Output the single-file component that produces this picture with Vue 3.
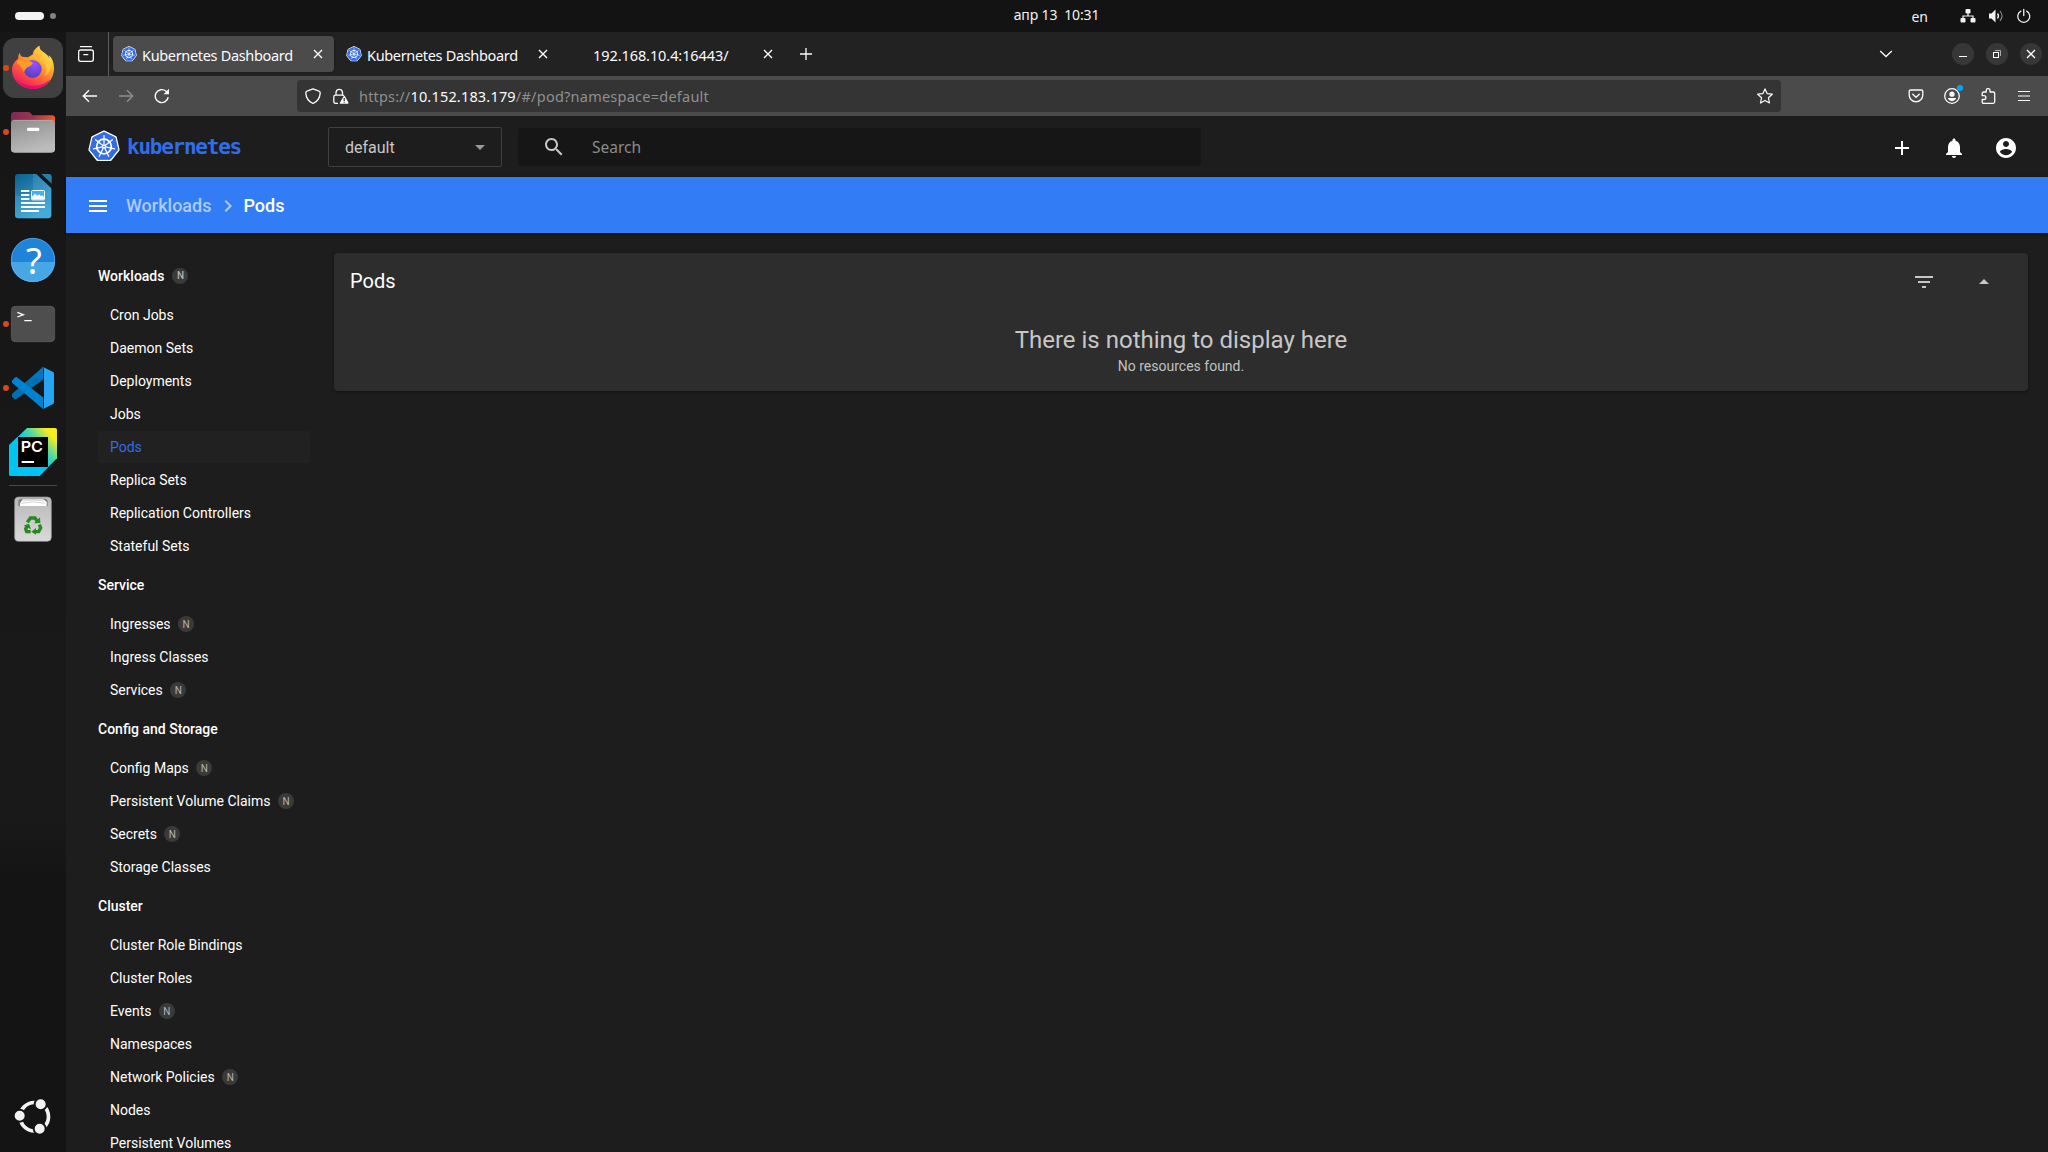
<script setup>
const point = (r, i, n = 7, offset = -90) => {
  const a = ((offset + (360 / n) * i) * Math.PI) / 180
  return [16 + r * Math.cos(a), 16 + r * Math.sin(a)].map((v) => v.toFixed(2))
}
const ring = (r) => Array.from({ length: 7 }, (_, i) => point(r, i).join(',')).join(' ')
const outerShape = ring(15)
const innerShape = ring(14.2)
const spokes = Array.from({ length: 7 }, (_, i) => {
  const [x1, y1] = point(1.5, i)
  const [x2, y2] = point(10.8, i)
  return { x1, y1, x2, y2 }
})

const tabs = [
  { title: 'Kubernetes Dashboard', icon: true, active: true },
  { title: 'Kubernetes Dashboard', icon: true },
  { title: '192.168.10.4:16443/', icon: false, address: true },
]

const sections = [
  {
    title: 'Workloads',
    n: true,
    items: [
      ['Cron Jobs'], ['Daemon Sets'], ['Deployments'], ['Jobs'], ['Pods'],
      ['Replica Sets'], ['Replication Controllers'], ['Stateful Sets'],
    ],
  },
  { title: 'Service', items: [['Ingresses', true], ['Ingress Classes'], ['Services', true]] },
  {
    title: 'Config and Storage',
    items: [['Config Maps', true], ['Persistent Volume Claims', true], ['Secrets', true], ['Storage Classes']],
  },
  {
    title: 'Cluster',
    items: [
      ['Cluster Role Bindings'], ['Cluster Roles'], ['Events', true], ['Namespaces'],
      ['Network Policies', true], ['Nodes'], ['Persistent Volumes'],
    ],
  },
]
</script>

<template>
  <div class="desktop">
    <svg class="defs" width="0" height="0">
      <symbol id="helm" viewBox="0 0 32 32">
        <polygon :points="outerShape" fill="#fff" stroke="#fff" stroke-width="2" stroke-linejoin="round" />
        <polygon :points="innerShape" fill="#326de6" stroke="#326de6" stroke-width="1" stroke-linejoin="round" />
        <circle cx="16" cy="16" r="7.3" fill="none" stroke="#fff" stroke-width="1.7" />
        <line v-for="(s, i) in spokes" :key="i" v-bind="s" stroke="#fff" stroke-width="1.25" stroke-linecap="round" />
        <circle cx="16" cy="16" r="2" fill="#fff" />
        <circle cx="16" cy="16" r=".8" fill="#326de6" />
      </symbol>
    </svg>

    <header class="topbar">
      <div class="workspaces"><i class="pill"></i><i class="dot"></i></div>
      <div class="clock">апр 13&nbsp; 10:31</div>
      <div class="tray">
        <span class="lang">en</span>
        <svg width="16" height="16" viewBox="0 0 16 16" fill="#f2f2f2">
          <rect x="5.5" y="1" width="5" height="4.4" rx="1" /><rect x=".5" y="10" width="5" height="4.4" rx="1" /><rect x="10.5" y="10" width="5" height="4.4" rx="1" />
          <path d="M8 5v3M3 10.500V8h10v2.500" fill="none" stroke="#f2f2f2" stroke-width="1.200" />
        </svg>
        <svg width="16" height="16" viewBox="0 0 16 16">
          <path d="M1 5.500h2.500L7.500 1.500v13L3.500 10.500H1z" fill="#f2f2f2" />
          <path d="M9.500 5.500q2 2.500 0 5" fill="none" stroke="#f2f2f2" stroke-width="1.300" />
          <path d="M12 3q4 5 0 10" fill="none" stroke="#888" stroke-width="1.200" />
        </svg>
        <svg width="16" height="16" viewBox="0 0 16 16" fill="none" stroke="#f2f2f2" stroke-width="1.300" stroke-linecap="round">
          <path d="M4.800 3.100a6 6 0 1 0 5.900 0M7.750 1.500v6" />
        </svg>
      </div>
    </header>

    <div class="body">
      <nav class="dock">
        <div class="slot focused">
          <svg class="app" viewBox="0 108 198 192">
            <defs>
              <linearGradient id="fx" x1=".85" y1=".1" x2=".3" y2="1"><stop offset="0" stop-color="#fff44f" /><stop offset=".35" stop-color="#ffa62b" /><stop offset=".65" stop-color="#ff5b3a" /><stop offset="1" stop-color="#ed1468" /></linearGradient>
              <radialGradient id="fxg" cx=".6" cy=".2" r=".9"><stop offset="0" stop-color="#9a50ff" /><stop offset="1" stop-color="#4b3fb5" /></radialGradient>
              <linearGradient id="fxr" x1="1" y1="0" x2="0" y2="1"><stop offset="0" stop-color="#fff04b" /><stop offset="1" stop-color="#ff8a2a" /></linearGradient>
            </defs>
            <path d="M60 158Q53 165 54 176Q36 190 36 208C36 243 64 267 99 267C135 267 162 240 162 205C162 184 154 171 146 166Q150 175 147 180Q135 159 122 150Q117 143 118 137Q103 148 99 163L84 172L66 170Q59 166 60 158Z" fill="url(#fx)" />
            <path d="M118 137Q96 150 99 168Q130 171 137 200Q141 219 128 232Q153 220 154 190Q147 163 126 154Q117 147 118 137Z" fill="url(#fxr)" />
            <path d="M48 236Q66 258 99 257Q130 258 151 237Q135 267 99 267Q67 266 48 236Z" fill="#e80078" opacity=".75" />
            <circle cx="98" cy="207" r="27" fill="url(#fxg)" />
            <path d="M52 182Q70 175 85 182Q95 185 99 189Q95 198 82 202Q74 209 72 217Q65 200 52 190Z" fill="#ff9a28" />
          </svg><i class="run"></i>
        </div>
        <div class="slot">
          <svg class="app" viewBox="0 300 198 192">
            <defs><linearGradient id="fo"><stop offset="0" stop-color="#7b2859" /><stop offset=".5" stop-color="#9d3550" /><stop offset="1" stop-color="#f0582a" /></linearGradient><linearGradient id="fg" x2="0.400" y2="1"><stop offset="0" stop-color="#8c8c8c" /><stop offset="1" stop-color="#bcbcbc" /></linearGradient></defs>
            <path d="M33 345q0-9 9-9h42q5 0 8 4l5 6h59q9 0 9 9v40H33z" fill="url(#fo)" />
            <rect x="33" y="360" width="132" height="98" rx="10" fill="url(#fg)" /><path d="M40 361h118" stroke="#b5b5b5" stroke-width="2" />
            <rect x="81" y="383" width="37" height="10" rx="4" fill="#fff" />
          </svg><i class="run"></i>
        </div>
        <div class="slot">
          <svg class="app" viewBox="0 492 198 192">
            <defs><linearGradient id="wr" x1="0" y1="0" x2=".5" y2="1"><stop offset="0" stop-color="#0b5f90" /><stop offset="1" stop-color="#45a8d8" /></linearGradient></defs>
            <path d="M54 522h55l45 43v80q0 10-10 10H54q-9 0-9-10V531q0-9 9-9z" fill="url(#wr)" />
            <path d="M99 522h10l45 43v22H99z" fill="#8ccfee" opacity=".18" /><path d="M45 587h109v58q0 10-10 10H54q-9 0-9-10z" fill="#48b0e0" opacity=".3" />
            <path d="M124 522h24q7 0 7 7v22z" fill="#287da9" />
            <path d="M63 573h25M63 585h25M63 597h25M63 609h72M63 621h72M63 633h54" stroke="#fff" stroke-width="6" />
            <rect x="94.500" y="571.500" width="39" height="28" rx="3" fill="#42b4ec" stroke="#fff" stroke-width="3" /><path d="M96 598v-8l9-9 7 6 6-4 5 6 4-3 6 7v5z" fill="#fff" />
          </svg>
        </div>
        <div class="slot">
          <svg class="app" viewBox="0 -6 198 192">
            <circle cx="99" cy="90" r="66" fill="#1f83d8" /><path d="M33 96h132a66 60 0 0 1-132 0z" fill="#48a6e6" />
            <circle cx="99" cy="90" r="65" fill="none" stroke="#63b4ec" stroke-width="2" />
            <text x="102" y="131" font-size="109" text-anchor="middle" fill="#fff" class="noto">?</text>
          </svg>
        </div>
        <div class="slot">
          <svg class="app" viewBox="0 186 198 192">
            <rect x="34" y="229" width="130" height="106" rx="12" fill="#4e4e4e" stroke="#656565" stroke-width="2" />
            <path d="M52 247l18 7-18 7M73 272h22" fill="none" stroke="#fff" stroke-width="4" />
          </svg><i class="run"></i>
        </div>
        <div class="slot">
          <svg class="app" viewBox="0 378 198 192">
            <path d="M36 492L129 411v38L49 507q-4 2-7-1l-6-7z" fill="#0070b4" />
            <path d="M36 452l8-9q4-3 7-1l78 60v35L36 458z" fill="#0082d0" />
            <path d="M129 411l29 14q4 2 4 6v86q0 4-4 6l-29 14q3-3 3-8v-110q0-5-3-8z" fill="#27a5f2" />
            <path d="M129 411l-35 34 35 0z" fill="#0078bf" />
          </svg><i class="run"></i>
        </div>
        <div class="slot">
          <svg class="app" viewBox="0 570 198 192">
            <defs><linearGradient id="py" x1=".35" y1=".6" x2=".95" y2=".05"><stop offset=".2" stop-color="#00c8f5" /><stop offset=".5" stop-color="#4bd8a5" /><stop offset=".85" stop-color="#f7ec20" /></linearGradient></defs>
            <path d="M81 594h84q6 0 6 6v85l-53 53H33q-6 0-6-6v-86z" fill="url(#py)" />
            <path d="M27 646l26-26v91h91l-26 27H33q-6 0-6-6z" fill="#00c5f3" />
            <rect x="54" y="621" width="90" height="90" /><rect x="65" y="693" width="37" height="6" fill="#fff" />
            <text x="62" y="667" font-size="45" font-weight="600" textLength="67" lengthAdjust="spacingAndGlyphs" fill="#fff" class="inter">PC</text>
          </svg>
        </div>
        <div class="rule"></div>
        <div class="slot">
          <svg class="app" viewBox="0 771 198 192">
            <defs><linearGradient id="tr" x2="0" y2="1"><stop offset="0" stop-color="#b8b8b8" /><stop offset="1" stop-color="#dadada" /></linearGradient></defs>
            <rect x="44" y="801" width="110" height="133" rx="12" fill="url(#tr)" stroke="#989898" stroke-width="2" />
            <path d="M55 828v-13q0-9 9-9h70q9 0 9 9v13z" fill="#808080" /><path d="M60 828v-8l8-12h62l10 8v12z" fill="#fff" /><path d="M64 820q34-9 72 0M66 813q36-6 66 0" fill="none" stroke="#aaa" stroke-width="1.500" />
            <g id="arrows" fill="none" stroke="#28891f" stroke-width="10">
              <path d="M82 877l9-13h14l8 11M118 884l4 10-6 11h-13M92 905H80l-3-8 6-11" />
            </g>
            <path d="M102 880l19-1-1-17zM108 894v20l-14-9zM71 887l16-6 6 17z" fill="#28891f" />
          </svg>
        </div>
        <div class="slot last">
          <svg class="app" viewBox="0 615 198 192">
            <circle cx="103" cy="710" r="42.500" fill="none" stroke="#f2f2f2" stroke-width="11" />
            <g fill="#f2f2f2" stroke="#151515" stroke-width="6"><circle cx="122" cy="673" r="18" /><circle cx="59" cy="707" r="18" /><circle cx="119" cy="746" r="18" /></g>
          </svg>
        </div>
      </nav>

      <div class="browser">
        <div class="tabstrip">
          <div class="tabview">
            <svg width="16" height="16" viewBox="0 0 16 16" fill="none" stroke="#fbfbfe" stroke-width="1.300" stroke-linecap="round"><rect x=".65" y="4" width="14.700" height="11.300" rx="2" /><path d="M2.500 .7h11M5.800 8.700h4" /></svg>
          </div>
          <div v-for="(t, i) in tabs" :key="i" class="tab" :class="{ active: t.active }">
            <svg v-if="t.icon" class="favicon"><use href="#helm" /></svg>
            <span v-else class="favicon"></span>
            <span class="tab-title" :class="{ address: t.address }">{{ t.title }}</span>
            <svg class="close" width="10" height="10" viewBox="0 0 10 10"><path d="M1 1l8 8M9 1L1 9" stroke="#fbfbfe" stroke-width="1.400" /></svg>
          </div>
          <svg class="newtab" width="14" height="14" viewBox="0 0 14 14"><path d="M7 1v12M1 7h12" stroke="#fbfbfe" stroke-width="1.300" /></svg>
          <div class="win">
            <svg class="down" width="14" height="14" viewBox="0 0 14 14" fill="none" stroke="#fbfbfe" stroke-width="1.300"><path d="M1.200 4L7 9.500 12.800 4" /></svg>
            <span class="wbtn"><svg width="12" height="12" viewBox="0 0 12 12"><path d="M2 8.500h8" stroke="#fff" /></svg></span>
            <span class="wbtn"><svg width="12" height="12" viewBox="0 0 12 12" fill="none"><path d="M4 2.500h5.500V8" stroke="#aaa" /><rect x="2.500" y="4.500" width="5" height="5" stroke="#fff" /></svg></span>
            <span class="wbtn"><svg width="12" height="12" viewBox="0 0 12 12"><path d="M2 2l8 8M10 2L2 10" stroke="#fff" stroke-width="1.300" /></svg></span>
          </div>
        </div>

        <div class="toolbar">
          <div class="navs">
            <svg width="16" height="16" viewBox="0 0 16 16" fill="none" stroke="#fbfbfe" stroke-width="1.400"><path d="M15 8H1.500M7 2.300L1.300 8 7 13.700" /></svg>
            <svg width="16" height="16" viewBox="0 0 16 16" fill="none" stroke="#8f8f91" stroke-width="1.400"><path d="M1 8h13.500M9 2.300L14.700 8 9 13.700" /></svg>
            <svg width="16" height="16" viewBox="0 0 16 16" fill="none" stroke="#fbfbfe" stroke-width="1.400"><path d="M14.200 9.100A6.500 6.500 0 1 1 12 3.200l1.500 1.200" /><path d="M15 .8v5.500H9.600z" fill="#fbfbfe" stroke="none" /></svg>
          </div>
          <div class="urlbar">
            <svg width="16" height="16" viewBox="0 0 16 16" fill="none" stroke="#fbfbfe" stroke-width="1.300" stroke-linejoin="round"><path d="M8 .8l6 2.300q1.300.5 1.200 2Q14.700 12.500 8 15.500 1.300 12.500.8 5.100q-.1-1.500 1.200-2z" /></svg>
            <svg class="lock" width="16" height="16" viewBox="0 0 16 16"><path d="M5 15.300H2.500q-1.700 0-1.700-1.700V9q0-1.800 1.700-1.800h7q1 0 1.400.6M3 7V4.300a3.300 3.500 0 0 1 6.500 0V7" fill="none" stroke="#fbfbfe" stroke-width="1.300" /><path d="M10.800 8.100q.5-.7 1 0l3.700 6.700q.3.900-.6.900H7.400q-.9 0-.5-.9z" fill="#fbfbfe" /><path d="M11.200 10v3M11.200 13.700v1" stroke="#333" stroke-width="1.200" /></svg>
            <div class="url"><span class="scheme">https://</span><b class="host">10.152.183.179</b><span class="path">/#/pod?namespace=default</span></div>
            <svg class="star" width="16" height="16" viewBox="0 0 16 16" fill="none" stroke="#fbfbfe" stroke-width="1.200" stroke-linejoin="round"><path d="M8 .9l2.100 4.700 5.200.6-3.900 3.500 1.100 5.300L8 12.400 3.500 15l1.100-5.300L.7 6.200l5.200-.6z" /></svg>
          </div>
          <div class="extras">
            <svg width="16" height="16" viewBox="0 0 16 16" fill="none" stroke="#fbfbfe" stroke-width="1.300" stroke-linecap="round"><path d="M2.500 2h11q1.300 0 1.300 1.300V7a6.800 6.800 0 0 1-13.600 0V3.300Q1.200 2 2.500 2zM4.700 6.300L8 9.300l3.300-3" /></svg>
            <span class="acct"><svg width="16" height="16" viewBox="0 0 16 16"><circle cx="8" cy="8" r="7.300" fill="none" stroke="#fbfbfe" stroke-width="1.300" /><circle cx="8" cy="6.200" r="2.600" fill="#fbfbfe" /><path d="M4 10h8v.8q-1.500 2.400-4 2.400t-4-2.400z" fill="#fbfbfe" /></svg><i></i></span>
            <svg width="16" height="16" viewBox="0 0 16 16" fill="none" stroke="#fbfbfe" stroke-width="1.300" stroke-linejoin="round"><path d="M6.200 4V2.500a1.900 1.900 0 0 1 3.800 0V4h3.200q1.500 0 1.500 1.500v8.300q0 1.500-1.500 1.500H3.700q-1.500 0-1.500-1.500v-2.300H4a1.900 1.900 0 0 0 0-3.800H2.200V5.500Q2.200 4 3.700 4z" /></svg>
            <svg width="16" height="16" viewBox="0 0 16 16" stroke="#fbfbfe" stroke-width="1.200"><path d="M2 3.500h12M2 8h12M2 12.500h12" /></svg>
          </div>
        </div>

        <div class="apphead">
          <svg class="logo"><use href="#helm" /></svg>
          <span class="brand">kubernetes</span>
          <div class="ns"><span>default</span><i></i></div>
          <div class="search">
            <svg width="24" height="24" viewBox="0 0 24 24" fill="#c7c7c7"><path d="M15.500 14h-.79l-.28-.27C15.410 12.590 16 11.110 16 9.500 16 5.910 13.090 3 9.500 3S3 5.910 3 9.500 5.910 16 9.500 16c1.610 0 3.090-.59 4.230-1.570l.27.28v.79l5 4.990L20.490 19l-4.990-5zm-6 0C7.010 14 5 11.990 5 9.500S7.010 5 9.500 5 14 7.010 14 9.500 11.990 14 9.500 14z" /></svg>
            <span>Search</span>
          </div>
          <div class="actions">
            <svg width="24" height="24" viewBox="0 0 24 24" fill="#fff"><path d="M19 13h-6v6h-2v-6H5v-2h6V5h2v6h6v2z" /></svg>
            <svg width="24" height="24" viewBox="0 0 24 24" fill="#fff"><path d="M12 22c1.100 0 2-.9 2-2h-4c0 1.100.89 2 2 2zm6-6v-5c0-3.070-1.640-5.640-4.500-6.320V4c0-.83-.67-1.500-1.500-1.500s-1.500.67-1.500 1.500v.68C7.630 5.360 6 7.920 6 11v5l-2 2v1h16v-1l-2-2z" /></svg>
            <svg width="24" height="24" viewBox="0 0 24 24" fill="#fff"><path d="M12 2C6.480 2 2 6.480 2 12s4.480 10 10 10 10-4.480 10-10S17.520 2 12 2zm0 3c1.660 0 3 1.340 3 3s-1.340 3-3 3-3-1.340-3-3 1.340-3 3-3zm0 14.200c-2.500 0-4.710-1.280-6-3.220.03-1.990 4-3.080 6-3.080 1.990 0 5.970 1.090 6 3.080-1.290 1.940-3.500 3.220-6 3.220z" /></svg>
          </div>
        </div>

        <div class="crumbs">
          <svg class="menu" width="24" height="24" viewBox="0 0 24 24" fill="#fff"><path d="M3 18h18v-2H3v2zm0-5h18v-2H3v2zm0-7v2h18V6H3z" /></svg>
          <span class="parent">Workloads</span>
          <svg class="sep" width="24" height="24" viewBox="0 0 24 24" fill="#adcbfb"><path d="M10 6L8.590 7.410 13.170 12l-4.580 4.590L10 18l6-6z" /></svg>
          <span class="here">Pods</span>
        </div>

        <div class="page">
          <aside class="side">
            <template v-for="s in sections" :key="s.title">
              <div class="group">{{ s.title }}<i v-if="s.n" class="badge">N</i></div>
              <div v-for="it in s.items" :key="it[0]" class="item" :class="{ on: it[0] === 'Pods' }">{{ it[0] }}<i v-if="it[1]" class="badge">N</i></div>
            </template>
          </aside>
          <main class="main">
            <section class="card">
              <div class="card-head">
                <h1>Pods</h1>
                <svg width="24" height="24" viewBox="0 0 24 24" fill="#c7c7c7"><path d="M10 18h4v-2h-4v2zM3 6v2h18V6H3zm3 7h12v-2H6v2z" /></svg>
                <svg width="24" height="24" viewBox="0 0 24 24" fill="#c7c7c7"><path d="M7 14l5-5 5 5z" /></svg>
              </div>
              <p class="empty">There is nothing to display here</p>
              <p class="hint">No resources found.</p>
            </section>
          </main>
        </div>
      </div>
    </div>
  </div>
</template>

<style>
body { background: #161616; overflow: hidden; }
</style>

<style scoped>
* { box-sizing: border-box; }
.desktop { width: 2048px; height: 1152px; overflow: hidden; display: flex; flex-direction: column; background: #161616; color: #fff; font-family: "Noto Sans", sans-serif; }
svg { display: block; flex: none; }
.defs { position: absolute; }
.noto { font-family: "Noto Sans", sans-serif; }
.inter { font-family: Inter, sans-serif; }
.topbar { height: 32px; flex: none; background: #131313; display: grid; grid-template-columns: 1fr auto 1fr; align-items: center; }
.workspaces { display: flex; align-items: center; gap: 6px; padding-left: 15px; }
.pill { width: 29px; height: 8px; border-radius: 4px; background: #f2f2f2; }
.dot { width: 6px; height: 6px; border-radius: 50%; background: #838383; }
.clock { font-size: 14px; line-height: 20px; color: #f2f2f2; padding-left: 65px; letter-spacing: -.15px; margin-bottom: 2px; }
.tray { display: flex; align-items: center; justify-content: flex-end; gap: 12px; padding-right: 16px; }
.lang { font-size: 14px; color: #f2f2f2; margin-right: 20px; }
.body { flex: 1; min-height: 0; display: flex; }
.dock { width: 66px; flex: none; background: linear-gradient(#161616, #191919 70%, #141414 76%); padding: 4px 0 3px; display: flex; flex-direction: column; }
.slot { position: relative; height: 64px; flex: none; }
.slot.focused { background: #404040; margin: 2px 3px; height: 60px; border-radius: 12px; }
.slot.focused .app { margin: -2px -3px; }
.app { width: 66px; height: 64px; }
.run { position: absolute; left: 3px; top: 29px; width: 6px; height: 6px; border-radius: 50%; background: #d9481c; }
.focused .run { left: 0; top: 27px; }
.rule { height: 1px; background: #484848; margin: 1px 9px; }
.last { margin-top: auto; }
.browser { flex: 1; min-width: 0; display: flex; flex-direction: column; background: #1d1d1d; }
.tabstrip { height: 44px; flex: none; background: #222; display: flex; align-items: center; }
.tabview { width: 43px; height: 44px; border-right: 1px solid #5c5c5c; padding: 14px 0 0 12px; margin-right: 4px; }
.tab { width: 221px; height: 36px; margin-right: 4px; border-radius: 4px; display: flex; align-items: center; padding: 0 11px 0 8px; }
.tab.active { background: #4b4b4b; box-shadow: 0 0 3px rgba(0, 0, 0, .3); }
.favicon { width: 16px; height: 16px; flex: none; margin-right: 5px; }
.tab-title { font-size: 14.500px; letter-spacing: -.33px; color: #fbfbfe; flex: 1; white-space: nowrap; padding-top: 1px; }
.tab-title.address { letter-spacing: -.08px; padding-left: 1px; }
.close { flex: none; }
.newtab { margin-left: 11px; }
.win { margin-left: auto; display: flex; align-items: center; gap: 12px; padding-right: 6px; }
.down { margin-right: 47px; }
.wbtn { width: 22px; height: 22px; border-radius: 50%; background: #373737; display: flex; align-items: center; justify-content: center; }
.toolbar { height: 40px; flex: none; background: #4b4b4b; display: flex; align-items: center; }
.navs { width: 231px; display: flex; gap: 20px; padding-left: 16px; }
.urlbar { width: 1484px; height: 32px; border-radius: 4px; background: #343434; display: flex; align-items: center; padding: 0 8px; }
.lock { margin-left: 12px; }
.url { margin-left: 10px; font-size: 14.500px; letter-spacing: .18px; color: #8f8f91; white-space: nowrap; }
.host { font-weight: 400; color: #fbfbfe; }
.path { letter-spacing: .24px; }
.star { margin-left: auto; }
.extras { margin-left: auto; padding-right: 16px; display: flex; gap: 20px; }
.acct { position: relative; }
.acct i { position: absolute; right: -3px; top: -3px; width: 6px; height: 6px; border-radius: 50%; background: #00a8f5; }
.apphead { height: 61px; flex: none; display: flex; align-items: center; padding: 0 30px 0 22px; }
.logo { width: 32px; height: 33px; }
.brand { width: 120px; margin-left: 7px; font: bold 21px "DejaVu Sans Mono", monospace; letter-spacing: -1.250px; color: #326de6; }
.ns { width: 174px; height: 40px; margin-left: 81px; border: 1px solid #404040; border-radius: 2px; display: flex; align-items: center; justify-content: space-between; padding: 1px 16px 0; font: 16px Roboto, sans-serif; color: #c7c7c7; }
.ns i { border: 5px solid transparent; border-top-color: #999; border-bottom: 0; }
.search { width: 683px; height: 38px; margin-left: 16px; background: #161616; border-radius: 3px; display: flex; align-items: center; padding-left: 24px; font-size: 15.500px; color: #8b8b8b; }
.search span { margin-left: 26px; }
.actions { margin-left: auto; display: flex; gap: 28px; padding-top: 2px; }
.crumbs { height: 56px; flex: none; background: #327df5; box-shadow: 0 1px 3px rgba(0, 0, 0, .5); display: flex; align-items: center; padding-left: 20px; font: 500 18px Roboto, sans-serif; }
.menu { margin-top: 2px; }
.parent { margin-left: 16px; color: #adcbfb; }
.sep { margin: 1px 3px 0 5px; }
.page { flex: 1; min-height: 0; display: flex; font-family: Roboto, sans-serif; }
.side { width: 268px; flex: none; padding: 21px 24px 0 32px; overflow: hidden; font-size: 14px; }
.group { height: 43px; margin-bottom: 2px; display: flex; align-items: center; font-weight: 500; }
.group .badge { margin-left: 8px; }
.item { height: 32px; margin-bottom: 1px; padding-left: 12px; border-radius: 2px; display: flex; align-items: center; white-space: nowrap; }
.item.on { background: #212121; color: #326de6; }
.badge { width: 16px; height: 16px; margin-left: 7.500px; border-radius: 50%; background: #3a3a3a; color: #b5b5b5; font-size: 10px; font-style: normal; display: flex; align-items: center; justify-content: center; }
.main { flex: 1; padding: 20px 20px 0 0; }
.card { height: 138px; border-radius: 4px; background: #2d2d2d; box-shadow: 0 1px 3px rgba(0, 0, 0, .45); text-align: center; }
.card-head { height: 56px; display: flex; align-items: center; padding: 0 32px 0 16px; gap: 36px; text-align: left; }
.card-head svg { margin-top: 2px; }
h1 { margin: 0 auto 0 0; font-size: 20px; font-weight: 400; }
.empty { margin: 15px 0 0; font-size: 24px; line-height: 32px; color: #c7c7c7; }
.hint { margin: 0; font-size: 14px; line-height: 20px; color: #c0c0c0; }
</style>
